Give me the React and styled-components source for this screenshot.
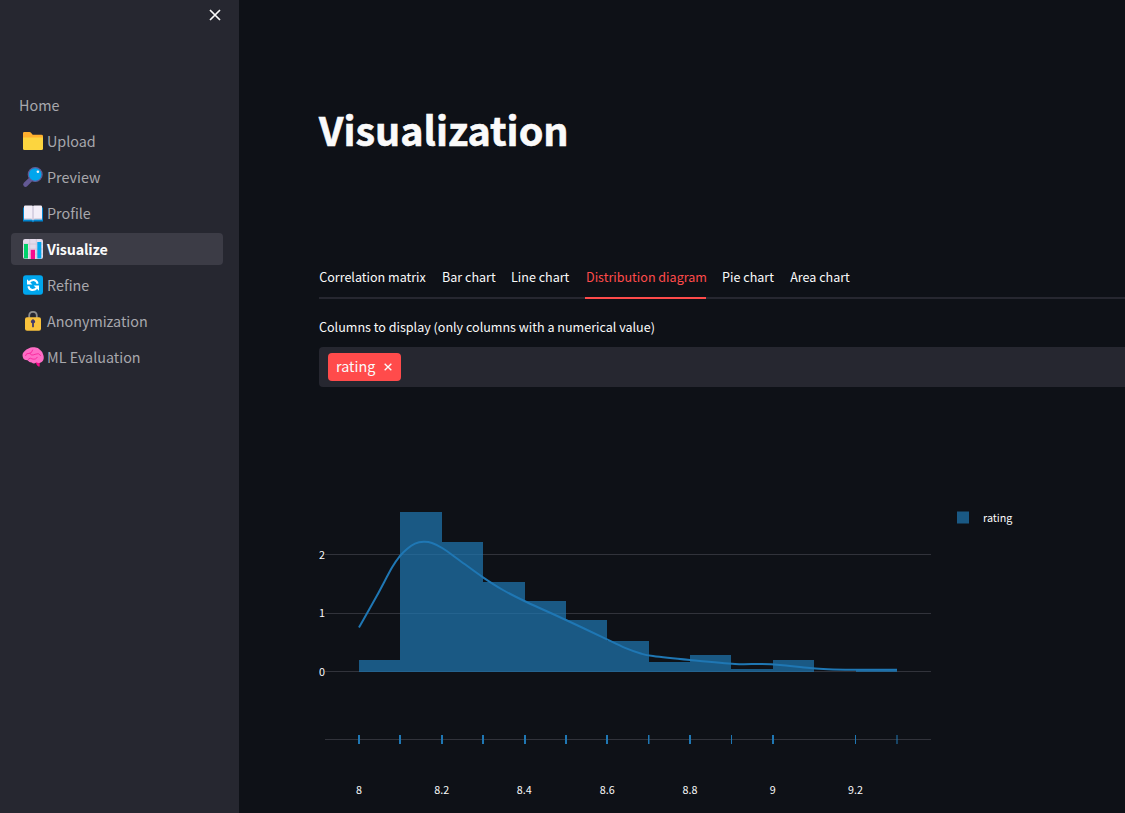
import React from "react";
import styled, { createGlobalStyle } from "styled-components";

const GlobalStyle = createGlobalStyle`
  * { box-sizing: border-box; }
  html, body { margin: 0; padding: 0; overflow: hidden; background: #0e1117; }
  body { font-family: "Noto Sans CJK SC", "Open Sans", sans-serif; color: #fafafa; }
`;

const Page = styled.div`
  display: flex;
  width: 1125px;
  height: 813px;
  overflow: hidden;
  background: #0e1117;
`;

const Sidebar = styled.aside`
  flex: 0 0 239px;
  height: 100%;
  background: #262730;
`;

const SidebarHeader = styled.div`
  display: flex;
  justify-content: flex-end;
  height: 89px;
  padding: 9px 18px 0 0;
`;

const CloseButton = styled.button`
  display: block;
  width: 12px;
  height: 12px;
  padding: 0;
  border: 0;
  background: none;
  svg { display: block; }
`;

const Nav = styled.nav`
  display: flex;
  flex-direction: column;
  gap: 4px;
  padding: 0 16px 0 11px;
`;

const NavItem = styled.a`
  display: flex;
  align-items: center;
  height: 32px;
  padding-left: ${(p) => (p.$plain ? "8px" : "12px")};
  border-radius: 4px;
  background: ${(p) => (p.$active ? "#3c3c46" : "transparent")};
  color: ${(p) => (p.$active ? "#fafafa" : "#a8a8ad")};
  font-size: 14.35px;
  font-weight: ${(p) => (p.$active ? 700 : 400)};
  letter-spacing: ${(p) => (p.$active ? "-0.2px" : "0")};
  line-height: 32px;
  white-space: nowrap;
  svg { flex: none; margin-right: 4px; overflow: visible; }
`;

const Main = styled.main`
  flex: 1;
  min-width: 0;
  display: flex;
  flex-direction: column;
  padding: 103px 0 0 80px;
`;

const Title = styled.h1`
  margin: 0 0 115px;
  height: 52px;
  line-height: 52px;
  font-size: 39.5px;
  font-weight: 700;
  -webkit-text-stroke: 0.6px #fafafa;
`;

const TabList = styled.div`
  display: flex;
  gap: 16px;
  height: 29px;
  border-bottom: 2px solid #262730;
`;

const Tab = styled.button`
  flex: none;
  width: ${(p) => p.$width}px;
  height: 29px;
  padding: 0 0 13px;
  border: 0;
  border-bottom: 2px solid ${(p) => (p.$active ? "#ff4b4b" : "transparent")};
  background: none;
  color: ${(p) => (p.$active ? "#ff4b4b" : "#fafafa")};
  font: 400 12.55px/14px "Noto Sans CJK SC", sans-serif;
  text-indent: ${(p) => (p.$active ? "1px" : "0")};
  white-space: nowrap;
`;

const Label = styled.label`
  height: 20px;
  margin: 18px 0 10px;
  font-size: 12.55px;
  line-height: 20px;
`;

const MultiSelect = styled.div`
  display: flex;
  align-items: center;
  height: 40px;
  padding-left: 9px;
  border-radius: 4px 0 0 4px;
  background: #262730;
`;

const Tag = styled.span`
  display: flex;
  align-items: center;
  justify-content: space-between;
  width: 73px;
  height: 28px;
  padding: 0 9px 0 8px;
  border-radius: 4px;
  background: #ff4b4b;
`;

const TagText = styled.span`
  height: 28px;
  font-size: 14.35px;
  line-height: 26px;
`;

const ChartArea = styled.div`
  height: 426px;
  svg { display: block; }
  text { font-size: 10.75px; fill: #fafafa; }
`;

const FolderIcon = () => (
  <svg width="20" height="20" viewBox="0 0 20 20">
    <path d="M0 2.2Q0 1 1.2 1H6.5Q7.4 1 8 1.8L9.7 3.8H18.5Q20 3.8 20 5.2V12H0Z" fill="#ffb02e" />
    <path d="M0 6.5H20V17.7Q20 19 18.6 19H1.4Q0 19 0 17.7Z" fill="#fcd53f" />
  </svg>
);

const MagnifierIcon = () => (
  <svg width="20" height="20" viewBox="0 0 20 20">
    <path d="M2.5 17.5 7.2 12.8" stroke="#635994" strokeWidth="4.6" strokeLinecap="round" />
    <path d="M6 14 9 11" stroke="#635994" strokeWidth="2" />
    <circle cx="12.2" cy="7.5" r="6.9" fill="#00a6ed" stroke="#635994" strokeWidth="1.3" />
    <circle cx="14.9" cy="4.7" r="1.3" fill="#f4f4f4" />
  </svg>
);

const BookIcon = () => (
  <svg width="20" height="20" viewBox="0 0 20 20">
    <path d="M0 5.5Q0 4 1.3 4H18.7Q20 4 20 5.5V18.5H11.2Q10 20 8.8 18.5H0Z" fill="#0084ce" />
    <path d="M1 3.6Q1 2.5 2.2 2.5H8.7Q10 2.5 10 3.8Q10 2.5 11.3 2.5H17.8Q19 2.5 19 3.6V16.5H11.5Q10 16.5 10 17.4Q10 16.5 8.5 16.5H1Z" fill="#f3eef8" />
    <path d="M10 3.8V17.4" stroke="#b9b0cb" strokeWidth=".9" />
    <path d="M1 15.6H8.7M11.3 15.6H19" stroke="#cdc4d6" strokeWidth=".7" />
  </svg>
);

const BarsIcon = () => (
  <svg width="20" height="20" viewBox="0 0 20 20">
    <rect width="20" height="20" rx="2" fill="#e4dbeb" />
    <path d="M0 5H20M0 10H20M0 15H20M6.7 0V20M13.3 0V20" stroke="#cdc4d6" strokeWidth=".8" />
    <path d="M1 5H5V19Q5 19.5 4.5 19.5H1Z" fill="#00d26a" />
    <path d="M7.7 10.8H12V20H7.7Z" fill="#f70a8d" />
    <path d="M14.3 3H18.3V19.5H14.3Z" fill="#00a6ed" />
  </svg>
);

const RefreshIcon = () => (
  <svg width="20" height="20" viewBox="0 0 20 20">
    <rect y=".2" width="20" height="19.6" rx="3" fill="#00a6ed" />
    <g fill="none" stroke="#fff" strokeWidth="2">
      <path d="M6 7.2Q8.2 4.8 11 5Q14 5.5 14.6 8.8" />
      <path d="M14 12.8Q11.8 15.2 9 15Q6 14.5 5.4 11.2" />
    </g>
    <path d="M4 4.2V9.6H9.4ZM16 15.8V10.4H10.6Z" fill="#fff" />
  </svg>
);

const LockIcon = () => (
  <svg width="20" height="20" viewBox="0 0 20 20">
    <path d="M6.2 8V4.6Q6.2 .8 10 .8Q13.8 .8 13.8 4.6V8" fill="none" stroke="#8d8d8d" strokeWidth="1.8" />
    <rect x="2" y="6.2" width="16" height="13.5" rx="2" fill="#f9c23c" />
    <path d="M9.1 12.3A2 2 0 1 1 10.9 12.3V15.8Q10 17 9.1 15.8Z" fill="#433b6b" />
  </svg>
);

const BrainIcon = () => (
  <svg width="20" height="20" viewBox="0 0 20 20">
    <path d="M12.6 14H16.7V19.6H15.5Q13.3 18.5 12.6 14Z" fill="#f70a8d" />
    <path d="M6 1.2Q8-.2 11 .3Q15 0 17.5 3.2Q20 4.8 20.4 8.2Q21.5 12 19.3 14.6Q17 17.2 13.5 15.2Q11 17.5 8.7 15.5Q6.5 15.6 4.5 13.2Q.5 13.2-.2 10Q-1.2 6.4 1.5 4.3Q3 2 6 1.2Z" fill="#ff6dc6" />
    <path d="M2.5 8.6Q3 5.9 6 6.4Q8.8 6.5 9.7 3M7 6.5Q8 9.2 12 7.3Q15.6 5.3 17.8 8.5M5.2 12.4Q7.2 9.8 9 11.9Q13 13 14.2 10.3" fill="none" stroke="#f70a8d" strokeWidth=".65" strokeLinecap="round" />
  </svg>
);

const CloseIcon = ({ size = 12, weight = 1.7 }) => (
  <svg width={size} height={size} viewBox="0 0 12 12">
    <path d="M1 1 11 11M11 1 1 11" stroke="#fafafa" strokeWidth={weight} />
  </svg>
);

const pages = [
  { name: "Home" },
  { name: "Upload", icon: <FolderIcon /> },
  { name: "Preview", icon: <MagnifierIcon /> },
  { name: "Profile", icon: <BookIcon /> },
  { name: "Visualize", icon: <BarsIcon />, active: true },
  { name: "Refine", icon: <RefreshIcon /> },
  { name: "Anonymization", icon: <LockIcon /> },
  { name: "ML Evaluation", icon: <BrainIcon /> },
];

const tabs = [
  { name: "Correlation matrix", width: 107 },
  { name: "Bar chart", width: 53 },
  { name: "Line chart", width: 58 },
  { name: "Distribution diagram", width: 121, active: true },
  { name: "Pie chart", width: 52 },
  { name: "Area chart", width: 60 },
];

/* Left edge, right edge and top of each histogram bin */
const bins = [
  [40, 81, 273], [81, 123, 125], [123, 164, 155], [164, 206, 195],
  [206, 247, 214], [247, 288, 233], [288, 330, 254], [330, 371, 275],
  [371, 412, 268], [412, 454, 282], [454, 495, 273], [537, 578, 283],
];

const rug = [
  [39, 2], [80, 2], [122, 2], [163, 2], [205, 2], [246, 2], [287, 2],
  [329, 1.5], [370, 2], [412, 1], [453, 2], [536, 1], [577, 2, 0.5],
];

const xLabels = [[40, "8"], [122.7, "8.2"], [205.3, "8.4"], [288.3, "8.6"], [371, "8.8"], [453.8, "9"], [536.5, "9.2"]];

const curve = [
  [40, 240.5], [58, 208.5], [73, 180.5], [81, 169], [88, 162], [96, 156.7],
  [104.5, 154.8], [113, 156], [124, 161.5], [141, 173.7], [164, 190.3],
  [184, 203], [207.5, 215], [247, 233], [288, 252.3], [308, 261.7],
  [321, 266.3], [334, 269], [371, 273], [416, 277], [441, 277],
  [461, 278], [491, 281], [514, 282.4], [578, 282.7],
];

const smoothPath = (points) =>
  points.slice(1).reduce((d, p, i) => {
    const a = points[Math.max(i - 1, 0)];
    const b = points[i];
    const c = points[Math.min(i + 2, points.length - 1)];
    const k = 1 / 6;
    const x1 = b[0] + (p[0] - a[0]) * k;
    const y1 = b[1] + (p[1] - a[1]) * k;
    const x2 = p[0] - (c[0] - b[0]) * k;
    const y2 = p[1] - (c[1] - b[1]) * k;
    return `${d}C${x1} ${y1} ${x2} ${y2} ${p[0]} ${p[1]}`;
  }, `M${points[0][0]} ${points[0][1]}`);

const DistributionChart = () => (
  <svg width="806" height="426">
    <g fill="#31333b">
      <rect x="6" y="167" width="606" height="1" />
      <rect x="6" y="226" width="606" height="1" />
      <rect x="6" y="284" width="606" height="1" />
      <rect x="6" y="352" width="606" height="1" />
    </g>
    <g fill="#1f77b4" fillOpacity="0.7">
      {bins.map(([x, end, top]) => (
        <rect key={x} x={x} y={top} width={end - x} height={285 - top} />
      ))}
    </g>
    <path d={smoothPath(curve)} fill="none" stroke="#1f77b4" strokeWidth="2" />
    <g fill="#1f77b4">
      {rug.map(([x, width, opacity = 1]) => (
        <rect key={x} x={x} y="348" width={width} height="9" opacity={opacity} />
      ))}
    </g>
    <g textAnchor="end">
      <text x="6" y="172">2</text>
      <text x="6" y="230">1</text>
      <text x="6" y="289">0</text>
    </g>
    <g textAnchor="middle">
      {xLabels.map(([x, text]) => (
        <text key={text} x={x} y="407">{text}</text>
      ))}
    </g>
    <rect x="638" y="124.5" width="12" height="12" fill="#1f77b4" fillOpacity="0.7" />
    <text x="664" y="135">rating</text>
  </svg>
);

export default function App() {
  return (
    <Page>
      <GlobalStyle />
      <Sidebar>
        <SidebarHeader>
          <CloseButton aria-label="Close"><CloseIcon /></CloseButton>
        </SidebarHeader>
        <Nav>
          {pages.map((p) => (
            <NavItem key={p.name} $active={p.active} $plain={!p.icon}>
              {p.icon}
              {p.name}
            </NavItem>
          ))}
        </Nav>
      </Sidebar>
      <Main>
        <Title>Visualization</Title>
        <TabList>
          {tabs.map((t) => (
            <Tab key={t.name} $active={t.active} $width={t.width}>{t.name}</Tab>
          ))}
        </TabList>
        <Label>Columns to display (only columns with a numerical value)</Label>
        <MultiSelect>
          <Tag>
            <TagText>rating</TagText>
            <CloseIcon size={8} weight={2} />
          </Tag>
        </MultiSelect>
        <ChartArea>
          <DistributionChart />
        </ChartArea>
      </Main>
    </Page>
  );
}
